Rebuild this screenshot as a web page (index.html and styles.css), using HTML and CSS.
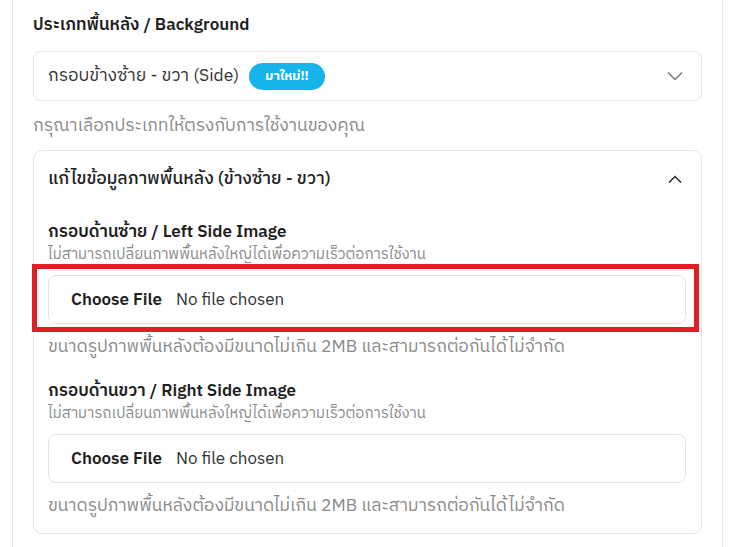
FILE: index.html
```html
<!DOCTYPE html>
<html lang="th">
<head>
<meta charset="utf-8">
<link rel="stylesheet" href="styles.css">
</head>
<body>
<div class="panel">
  <div class="field-label">ประเภทพื้นหลัง / Background</div>
  <div class="select">
    <span class="select-text">กรอบข้างซ้าย - ขวา (Side)</span>
    <span class="badge">มาใหม่!!</span>
    <svg class="chev-down" width="16" height="10" viewBox="0 0 16 10"><path d="M1 1.5 L8 8.5 L15 1.5" fill="none" stroke="#777" stroke-width="1.4"/></svg>
  </div>
  <div class="help">กรุณาเลือกประเภทให้ตรงกับการใช้งานของคุณ</div>

  <div class="accordion">
    <div class="acc-head">
      <span>แก้ไขข้อมูลภาพพื้นหลัง (ข้างซ้าย - ขวา)</span>
      <svg class="chev-up" width="14" height="9" viewBox="0 0 14 9"><path d="M1 7.5 L7 1.5 L13 7.5" fill="none" stroke="#222" stroke-width="1.4"/></svg>
    </div>
    <div class="acc-body">
      <div class="group first">
        <div class="sub-label">กรอบด้านซ้าย / Left Side Image</div>
        <div class="note">ไม่สามารถเปลี่ยนภาพพื้นหลังใหญ่ได้เพื่อความเร็วต่อการใช้งาน</div>
        <div class="file-wrap">
          <div class="file"><span class="file-btn">Choose File</span><span class="file-name">No file chosen</span></div>
          <div class="highlight"></div>
        </div>
        <div class="help small-gap">ขนาดรูปภาพพื้นหลังต้องมีขนาดไม่เกิน 2MB และสามารถต่อกันได้ไม่จำกัด</div>
      </div>
      <div class="group second">
        <div class="sub-label">กรอบด้านขวา / Right Side Image</div>
        <div class="note">ไม่สามารถเปลี่ยนภาพพื้นหลังใหญ่ได้เพื่อความเร็วต่อการใช้งาน</div>
        <div class="file-wrap">
          <div class="file"><span class="file-btn">Choose File</span><span class="file-name">No file chosen</span></div>
        </div>
        <div class="help small-gap">ขนาดรูปภาพพื้นหลังต้องมีขนาดไม่เกิน 2MB และสามารถต่อกันได้ไม่จำกัด</div>
      </div>
    </div>
  </div>
</div>
</body>
</html>
```

FILE: styles.css
```css
* { box-sizing: border-box; }
html, body { margin: 0; padding: 0; background: #fff; }
body {
  font-family: "IBM Plex Sans Thai", "Inter", "Noto Sans Thai", "Noto Sans", sans-serif;
  color: #222;
  font-size: 17.5px;
  overflow: hidden;
}
.panel {
  margin-left: 12px;
  width: 711px;
  min-height: 547px;
  border-left: 1px solid #e6e6e6;
  border-right: 1px solid #e6e6e6;
  padding: 13px 20px 0 20px;
}
.field-label {
  font-size: 17px;
  font-weight: 600;
  line-height: 24px;
  height: 24px;
  color: #1e1e1e;
}
.select {
  margin-top: 14px;
  height: 50px;
  border: 1px solid #e5e5e5;
  border-radius: 8px;
  display: flex;
  align-items: center;
  padding: 0 18px 0 14px;
}
.select-text { color: #333; line-height: 24px; }
.badge {
  margin-left: 10px;
  background: #16b4ea;
  color: #fff;
  font-size: 13px;
  font-weight: 700;
  border-radius: 14px;
  height: 27px;
  line-height: 27px;
  padding: 0 16px;
}
.chev-down { margin-left: auto; }
.help {
  margin-top: 13px;
  line-height: 24px;
  color: #8a8a8a;
}
.accordion {
  margin-top: 12px;
  border: 1px solid #e5e5e5;
  border-radius: 9px;
  padding: 0 15px 15px 14px;
}
.acc-head {
  display: flex;
  align-items: center;
  justify-content: space-between;
  height: 55px;
  padding-top: 1px;
  line-height: 24px;
  font-weight: 500;
  color: #222;
}
.chev-up { margin-right: 4px; }
.group.first { margin-top: 14px; }
.group.second { margin-top: 20px; }
.sub-label {
  font-size: 17px;
  font-weight: 600;
  line-height: 24px;
  color: #1e1e1e;
}
.note {
  margin-top: 2px;
  font-size: 15px;
  line-height: 18px;
  color: #8a8a8a;
}
.file-wrap {
  position: relative;
  margin-top: 11px;
}
.file {
  height: 49px;
  border: 1px solid #e3e3e3;
  border-radius: 8px;
  display: flex;
  align-items: center;
  padding-left: 22px;
  font-size: 17px;
}
.file-btn { font-weight: 600; color: #1e1e1e; }
.file-name { margin-left: 14px; color: #333; }
.highlight {
  position: absolute;
  left: -16px;
  right: -13px;
  top: -11px;
  bottom: -8px;
  border: 5px solid #e21d24;
  pointer-events: none;
}
.help.small-gap { margin-top: 11px; }
```
